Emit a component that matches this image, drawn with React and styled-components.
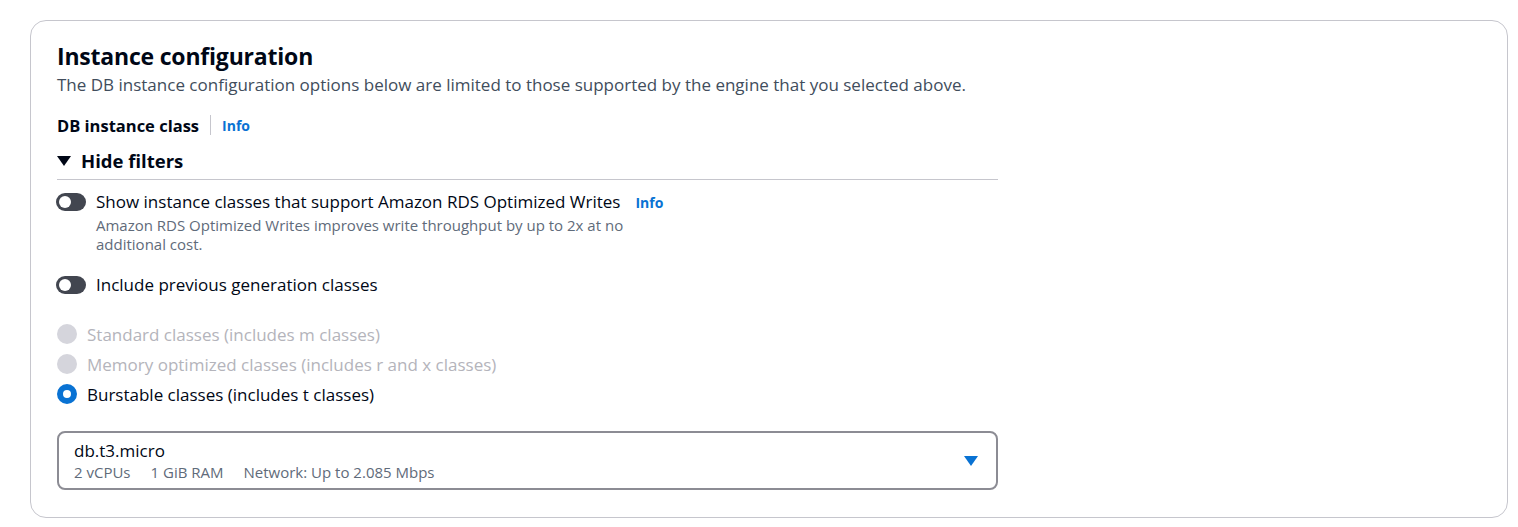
import React from 'react';
import styled, { createGlobalStyle } from 'styled-components';

const GlobalStyle = createGlobalStyle`
  body {
    margin: 0;
    background: #ffffff;
    font-family: "Open Sans", "Noto Sans", sans-serif;
    color: #000716;
  }
`;

const Page = styled.div`
  padding: 20px 10px 9px 30px;
`;

const Card = styled.section`
  border: 1px solid #c6c6cd;
  border-radius: 16px;
  padding: 20px 26px 25px 26px;
  min-height: 498px;
  box-sizing: border-box;
`;

const Column = styled.div`
  width: 941px;
`;

const Title = styled.h2`
  margin: 0;
  font-size: 23px;
  line-height: 30px;
  font-weight: 700;
  letter-spacing: -0.2px;
`;

const Lead = styled.p`
  margin: 2px 0 0;
  font-size: 17px;
  line-height: 24px;
  color: #414d5c;
`;

const LabelRow = styled.div`
  display: flex;
  align-items: center;
  margin-top: 17px;
  height: 22px;
`;

const FieldLabel = styled.span`
  font-size: 16.5px;
  font-weight: 700;
`;

const Divider = styled.span`
  width: 1px;
  height: 20px;
  background: #c6c6cd;
  margin: 0 11px 0 11px;
`;

const InfoLink = styled.a`
  font-size: 14px;
  font-weight: 700;
  color: #0972d3;
  margin-left: ${p => p.$gap || 0}px;
`;

const FilterToggle = styled.div`
  display: flex;
  align-items: center;
  gap: 10px;
  margin-top: 13px;
  padding-bottom: 6px;
  border-bottom: 1px solid #c6c6cd;
  font-size: 18.5px;
  font-weight: 700;
  line-height: 24px;
`;

const Caret = styled.span`
  width: 0;
  height: 0;
  border-left: 7px solid transparent;
  border-right: 7px solid transparent;
  border-top: 10px solid ${p => p.$color || '#000716'};
`;

const ToggleRow = styled.div`
  display: flex;
  align-items: flex-start;
  gap: 10px;
  margin-top: ${p => p.$top}px;
`;

const Switch = styled.span`
  flex: none;
  width: 30px;
  height: 18px;
  border-radius: 9px;
  background: #424650;
  margin: 3px 0 0 -1px;
  position: relative;
  &::after {
    content: '';
    position: absolute;
    left: 3px;
    top: 3px;
    width: 12px;
    height: 12px;
    border-radius: 50%;
    background: #fff;
  }
`;

const ToggleText = styled.div`
  display: flex;
  flex-direction: column;
`;

const ToggleLabel = styled.div`
  font-size: 17px;
  line-height: 24px;
`;

const Hint = styled.div`
  font-size: 15px;
  line-height: 19px;
  color: #5f6b7a;
  width: 545px;
  margin-top: 1px;
`;

const RadioGroup = styled.div`
  display: flex;
  flex-direction: column;
  gap: 6px;
  margin-top: 25px;
`;

const RadioRow = styled.label`
  display: flex;
  align-items: center;
  gap: 10px;
  height: 24px;
  font-size: 17px;
  color: ${p => (p.$disabled ? '#b4b4bb' : '#000716')};
`;

const RadioDot = styled.span`
  flex: none;
  width: 20px;
  height: 20px;
  border-radius: 50%;
  box-sizing: border-box;
  background: ${p => (p.$checked ? '#fff' : '#d5d5dc')};
  border: ${p => (p.$checked ? '6px solid #0972d3' : 'none')};
`;

const Select = styled.div`
  display: flex;
  align-items: center;
  justify-content: space-between;
  margin-top: 25px;
  height: 59px;
  box-sizing: border-box;
  border: 2px solid #8c8c94;
  border-radius: 8px;
  padding: 0 18px 0 15px;
`;

const SelectText = styled.div`
  display: flex;
  flex-direction: column;
  padding-top: 2px;
`;

const SelectValue = styled.div`
  font-size: 17px;
  line-height: 22px;
`;

const Tags = styled.div`
  display: flex;
  gap: 20px;
  font-size: 15px;
  line-height: 21px;
  color: #5f6b7a;
`;

const radios = [
  { label: 'Standard classes (includes m classes)', disabled: true },
  { label: 'Memory optimized classes (includes r and x classes)', disabled: true },
  { label: 'Burstable classes (includes t classes)', checked: true },
];

export default function App() {
  return (
    <Page>
      <GlobalStyle />
      <Card>
        <Title>Instance configuration</Title>
        <Lead>
          The DB instance configuration options below are limited to those supported by the engine that you selected above.
        </Lead>
        <Column>
          <LabelRow>
            <FieldLabel>DB instance class</FieldLabel>
            <Divider />
            <InfoLink>Info</InfoLink>
          </LabelRow>
          <FilterToggle>
            <Caret />
            Hide filters
          </FilterToggle>

          <ToggleRow $top={10}>
            <Switch />
            <ToggleText>
              <ToggleLabel>
                Show instance classes that support Amazon RDS Optimized Writes
                <InfoLink $gap={15}>Info</InfoLink>
              </ToggleLabel>
              <Hint>Amazon RDS Optimized Writes improves write throughput by up to 2x at no additional cost.</Hint>
            </ToggleText>
          </ToggleRow>

          <ToggleRow $top={19}>
            <Switch />
            <ToggleText>
              <ToggleLabel>Include previous generation classes</ToggleLabel>
            </ToggleText>
          </ToggleRow>

          <RadioGroup>
            {radios.map(r => (
              <RadioRow key={r.label} $disabled={r.disabled}>
                <RadioDot $checked={r.checked} />
                {r.label}
              </RadioRow>
            ))}
          </RadioGroup>

          <Select>
            <SelectText>
              <SelectValue>db.t3.micro</SelectValue>
              <Tags>
                <span>2 vCPUs</span>
                <span>1 GiB RAM</span>
                <span>Network: Up to 2.085 Mbps</span>
              </Tags>
            </SelectText>
            <Caret $color="#0972d3" />
          </Select>
        </Column>
      </Card>
    </Page>
  );
}
